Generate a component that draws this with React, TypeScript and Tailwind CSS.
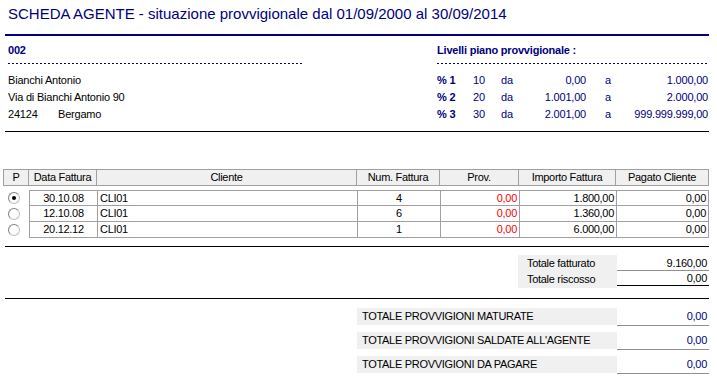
import React from "react";

const navy = "text-[#000080]";

const rows = [
  { checked: true, data: "30.10.08", cliente: "CLI01", num: "4", prov: "0,00", importo: "1.800,00", pagato: "0,00" },
  { checked: false, data: "12.10.08", cliente: "CLI01", num: "6", prov: "0,00", importo: "1.360,00", pagato: "0,00" },
  { checked: false, data: "20.12.12", cliente: "CLI01", num: "1", prov: "0,00", importo: "6.000,00", pagato: "0,00" },
];

const livelli = [
  { pct: "% 1", val: "10", da: "0,00", a: "1.000,00" },
  { pct: "% 2", val: "20", da: "1.001,00", a: "2.000,00" },
  { pct: "% 3", val: "30", da: "2.001,00", a: "999.999.999,00" },
];

const totali = ["TOTALE PROVVIGIONI MATURATE", "TOTALE PROVVIGIONI SALDATE ALL'AGENTE", "TOTALE PROVVIGIONI DA PAGARE"];

function Dotted({ className }: { className: string }) {
  return <div className={`h-px bg-[linear-gradient(to_right,#000080_50%,transparent_50%)] bg-[length:4px_1px] ${className}`} />;
}

function Radio({ checked }: { checked: boolean }) {
  return (
    <div className="flex h-[12px] w-[12px] items-center justify-center rounded-full border border-[#808080] border-r-[#c0c0c0] border-b-[#c0c0c0] bg-white">
      {checked && <div className="h-[4px] w-[4px] rounded-full bg-black" />}
    </div>
  );
}

export default function App() {
  return (
    <div className="h-[380px] w-[717px] overflow-hidden bg-white font-['Liberation_Sans',Arial,sans-serif] text-[11px] text-black">
      {/* titolo */}
      <div className={`h-[34px] pl-2 pt-[4px] text-[15px] leading-[20px] ${navy}`}>
        SCHEDA AGENTE - situazione provvigionale dal 01/09/2000 al 30/09/2014
      </div>
      <div className="ml-[5px] h-[2px] w-[704px] bg-[#000080]" />

      {/* anagrafica + livelli */}
      <div className="flex tracking-[-0.2px]">
        <div className="ml-2 w-[294px]">
          <div className={`mt-[6px] h-4 font-bold leading-4 ${navy}`}>002</div>
          <Dotted className="mt-[5px] w-[294px]" />
          <div className="mt-2 leading-[17px]">
            <div>Bianchi Antonio</div>
            <div>Via di Bianchi Antonio 90</div>
            <div className="flex">
              <span className="w-[50px]">24124</span>
              <span>Bergamo</span>
            </div>
          </div>
        </div>
        <div className="ml-[135px] w-[271px]">
          <div className={`mt-[6px] h-4 font-bold leading-4 ${navy}`}>Livelli piano provvigionale :</div>
          <Dotted className="mt-[5px] w-[271px]" />
          <div className={`mt-2 leading-[17px] ${navy}`}>
            {livelli.map((l) => (
              <div key={l.pct} className="flex">
                <span className="w-9 font-bold">{l.pct}</span>
                <span className="w-7">{l.val}</span>
                <span className="w-[29px]">da</span>
                <span className="w-[56px] text-right">{l.da}</span>
                <span className="w-[34px] pl-[19px]">a</span>
                <span className="w-[88px] text-right">{l.a}</span>
              </div>
            ))}
          </div>
        </div>
      </div>
      <div className="ml-[5px] mt-[8px] h-px w-[704px] bg-black" />

      {/* tabella fatture */}
      <div className="tracking-[-0.3px]">
        <div className="ml-[3px] mt-[37px] flex h-[17px] w-[706px] border border-[#a0a0a0] bg-[#f0f0f0] leading-[15px]">
          <div className="w-[25px] border-r border-[#a0a0a0] text-center">P</div>
          <div className="w-[68px] border-r border-[#a0a0a0] text-center">Data Fattura</div>
          <div className="w-[260px] border-r border-[#a0a0a0] text-center">Cliente</div>
          <div className="w-[83px] border-r border-[#a0a0a0] text-center">Num. Fattura</div>
          <div className="w-[79px] border-r border-[#a0a0a0] text-center">Prov.</div>
          <div className="w-[97px] border-r border-[#a0a0a0] text-center">Importo Fattura</div>
          <div className="flex-1 text-center">Pagato Cliente</div>
        </div>
        <div className="mt-[4px]">
          {rows.map((r, i) => (
            <div key={i} className="flex h-4 leading-[15px]">
              <div className="flex w-[29px] items-center justify-center pr-[2px]">
                <Radio checked={r.checked} />
              </div>
              <div className={`flex w-[680px] border-x border-b border-[#a0a0a0] ${i === 0 ? "border-t" : ""}`}>
                <div className="w-[68px] border-r border-[#a0a0a0] text-center">{r.data}</div>
                <div className="w-[260px] border-r border-[#a0a0a0] pl-[2px]">{r.cliente}</div>
                <div className="w-[83px] border-r border-[#a0a0a0] text-center">{r.num}</div>
                <div className="w-[79px] border-r border-[#a0a0a0] pr-[2px] text-right text-[#ff0000]">{r.prov}</div>
                <div className="w-[97px] border-r border-[#a0a0a0] pr-[2px] text-right">{r.importo}</div>
                <div className="flex-1 pr-[2px] text-right">{r.pagato}</div>
              </div>
            </div>
          ))}
        </div>
        <div className="ml-[5px] mt-[8px] h-px w-[704px] bg-black" />

        {/* totali fatture */}
        <div className="ml-[518px] mt-2 flex w-[191px]">
          <div className="h-[33px] w-[99px] bg-[#f0f0f0] pl-[9px] leading-4">
            <div>Totale fatturato</div>
            <div>Totale riscosso</div>
          </div>
          <div className="flex-1 pt-px leading-[14px]">
            <div className="border-b border-[#909090] pr-[2px] text-right">9.160,00</div>
            <div className="border-b border-black pr-[2px] text-right">0,00</div>
          </div>
        </div>
        <div className="ml-[5px] mt-[10px] h-px w-[704px] bg-black" />

        {/* totali provvigioni */}
        <div className="ml-[357px] mt-[9px] flex w-[352px] flex-col gap-[6px]">
          {totali.map((t) => (
            <div key={t} className="flex h-[18px]">
              <div className="h-[17px] w-[260px] bg-[#f0f0f0] pl-[5px] leading-[17px]">{t}</div>
              <div className={`h-[18px] flex-1 border-b border-[#909090] pr-[2px] text-right leading-[17px] ${navy}`}>0,00</div>
            </div>
          ))}
        </div>
      </div>
    </div>
  );
}
